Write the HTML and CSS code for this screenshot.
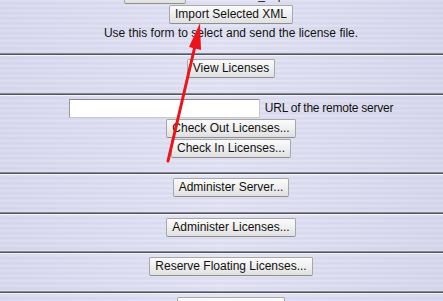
FILE: index.html
```html
<!DOCTYPE html>
<html lang="en">
<head>
    <meta charset="UTF-8">
    <title>License Server</title>
    <link rel="stylesheet" href="styles.css">
</head>
<body>
    <div class="page">
        <!-- Import section (scrolled, top is cut off) -->
        <div class="section top-section">
            <div class="file-row">
                <button class="btn btn-browse">Browse...</button>
                <span class="file-name">license_import.xml</span>
            </div>
            <button class="btn">Import Selected XML</button>
            <p class="note">Use this form to select and send the license file.</p>
        </div>
        <hr class="rule">

        <div class="section">
            <button class="btn">View Licenses</button>
        </div>
        <hr class="rule">

        <!-- Remote server -->
        <div class="section">
            <div class="url-row">
                <input type="text" class="url-input">
                <span class="url-label">URL of the remote server</span>
            </div>
            <button class="btn">Check Out Licenses...</button>
            <button class="btn">Check In Licenses...</button>
        </div>
        <hr class="rule">

        <div class="section">
            <button class="btn">Administer Server...</button>
        </div>
        <hr class="rule">

        <div class="section">
            <button class="btn">Administer Licenses...</button>
        </div>
        <hr class="rule">

        <div class="section">
            <button class="btn">Reserve Floating Licenses...</button>
        </div>
        <hr class="rule">

        <div class="section">
            <button class="btn">Usage Statistics...</button>
        </div>
    </div>

    <!-- Annotation arrow drawn over the page -->
    <svg class="arrow" width="443" height="301" viewBox="0 0 443 301">
        <line x1="168" y1="161" x2="195" y2="46" stroke="#ec1418" stroke-width="3" stroke-linecap="round"/>
        <polygon points="200,23 189,47 201,50" fill="#ec1418"/>
    </svg>
</body>
</html>
```

FILE: styles.css
```css
/* Page reset */
html, body {
    margin: 0;
    padding: 0;
    height: 100%;
    overflow: hidden;
}

body {
    font-family: "Liberation Sans", Arial, sans-serif;
    font-size: 12px;
    color: #111;
    /* brushed lavender background */
    background-color: #dcdcf1;
    background-image:
        repeating-linear-gradient(180deg, rgba(255,255,255,0.18) 0px, rgba(255,255,255,0) 2px, rgba(160,160,200,0.10) 3px, rgba(255,255,255,0) 5px),
        linear-gradient(90deg, #d8d8ee 0%, #e2e2f4 50%, #d6d6ec 100%);
    position: relative;
}

/* Content column, centered a bit right of the visible window */
.page {
    width: 462px;
}

.section {
    display: flex;
    flex-direction: column;
    align-items: center;
    gap: 1px;
    padding: 3px 0 14.5px;
}

.top-section {
    margin-top: -15px;
    padding-top: 0;
    padding-bottom: 13px;
}

.file-row {
    align-self: flex-start;
    display: flex;
    align-items: center;
    gap: 35px;
    margin-left: 124px;
}

.btn-browse {
    width: 62px;
    color: #999;
    border-color: #9fb6d9;
}

.file-name {
    color: #222;
}

.note {
    margin: 1px 0 0;
    line-height: 14px;
}

/* Grooved separator */
.rule {
    margin: 0;
    width: 443px;
    height: 1px;
    border: none;
    border-top: 1px solid #8a8a96;
    border-bottom: 1px solid #f4f4fb;
    background: #55555e;
}

.btn {
    font-family: "Liberation Sans", Arial, sans-serif;
    font-size: 12px;
    line-height: 13px;
    color: #111;
    padding: 2px 5px;
    height: 19px;
    border: 1px solid #a7a7a7;
    border-bottom-color: #8f8f8f;
    border-radius: 2px;
    background: linear-gradient(180deg, #fbfbfb 0%, #efefef 50%, #e0e0e0 100%);
}

.url-row {
    display: flex;
    align-items: center;
    gap: 5px;
}

.url-input {
    box-sizing: border-box;
    width: 191px;
    height: 19px;
    margin: 0;
    background: #fff;
    border: 1px solid #c8c8c8;
    border-top-color: #8a8a8a;
    border-left-color: #9a9a9a;
}

.url-label {
    letter-spacing: -0.25px;
}

.arrow {
    position: absolute;
    left: 0;
    top: 0;
}
```
